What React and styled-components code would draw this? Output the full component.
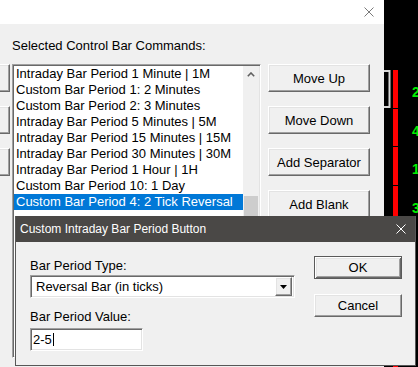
import React from "react"
import styled, { createGlobalStyle, css } from "styled-components"

const GlobalStyle = createGlobalStyle`
  html, body {
    margin: 0;
    padding: 0;
    background: #f0f0f0;
    overflow: hidden;
  }
  body {
    font-family: "Liberation Sans", Arial, sans-serif;
  }
`

const raised = css`
  box-sizing: border-box;
  border: 1px solid;
  border-color: #fff #696969 #696969 #fff;
  box-shadow: inset -1px -1px #a0a0a0, inset 1px 1px #e3e3e3;
  background: #f0f0f0;
`

const sunken = css`
  box-sizing: border-box;
  border: 1px solid;
  border-color: #a0a0a0 #fff #fff #a0a0a0;
  box-shadow: inset 1px 1px #696969, inset -1px -1px #e3e3e3;
  background: #fff;
`

const Screen = styled.div`
  position: relative;
  width: 418px;
  height: 367px;
  display: flex;
  overflow: hidden;
  font-size: 13px;
  color: #000;
`

const MainWindow = styled.div`
  width: 384px;
  display: flex;
  flex-direction: column;
  background: #f0f0f0;
`

const TitleBar = styled.div`
  height: 24px;
  flex: none;
  background: #fff;
  display: flex;
  align-items: center;
  justify-content: flex-end;
  padding-right: 10px;
`

const Body = styled.div`
  flex: 1;
  display: grid;
  grid-template-columns: 12px 256px 102px;
  grid-template-rows: 26px 1fr;
  padding-top: 14px;
  overflow: hidden;
`

const Label = styled.div`
  line-height: 16px;
  white-space: nowrap;
  grid-column: ${p => p.$col || "auto"};
`

const StubColumn = styled.div`
  grid-row: 2;
  grid-column: 1;
  display: flex;
  flex-direction: column;
  gap: 14px;
  overflow: hidden;
`

const Button = styled.button`
  ${raised};
  width: ${p => p.$w || 102}px;
  height: ${p => p.$h || 28}px;
  flex: none;
  padding: 0;
  font: 13px "Liberation Sans", Arial, sans-serif;
  color: #000;
  ${p =>
    p.$default &&
    css`
      border: 1px solid #5a5a5a;
      box-shadow: inset 1px 1px #fff, inset -1px -1px #696969,
        inset 2px 2px #e3e3e3, inset -2px -2px #a0a0a0;
    `}
`

const StubButton = styled(Button)`
  width: 80px;
  margin-left: -70px;
`

const ListBox = styled.div`
  ${sunken};
  grid-row: 2;
  grid-column: 2;
  width: 249px;
  height: 294px;
  padding: 1px;
  display: flex;
`

const Items = styled.div`
  flex: 1;
  min-width: 0;
  display: flex;
  flex-direction: column;
`

const Row = styled.div`
  height: 16px;
  line-height: 16px;
  padding-left: 2px;
  white-space: nowrap;
  overflow: hidden;
  background: ${p => (p.$selected ? "#0078d7" : "transparent")};
  color: ${p => (p.$selected ? "#fff" : "#000")};
`

const ScrollBar = styled.div`
  width: 16px;
  flex: none;
  background: #f0f0f0;
  display: flex;
  flex-direction: column;
`

const ArrowBox = styled.div`
  height: 17px;
  display: flex;
  align-items: center;
  justify-content: center;
`

const Thumb = styled.div`
  height: 120px;
  margin: 0 1px;
  background: #cdcdcd;
`

const ButtonColumn = styled.div`
  grid-row: 2;
  grid-column: 3;
  display: flex;
  flex-direction: column;
  gap: 14px;
`

const ChartStrip = styled.div`
  width: 34px;
  background: #000;
  display: flex;
`

const Dialog = styled.div`
  position: absolute;
  left: 15px;
  top: 216px;
  width: 401px;
  height: 150px;
  box-sizing: border-box;
  border: 1px solid #575757;
  border-top: none;
  background: #f0f0f0;
  display: flex;
  flex-direction: column;
`

const DialogTitle = styled.div`
  height: 26px;
  flex: none;
  background: #4a4846;
  color: #fff;
  font-size: 12px;
  display: flex;
  align-items: center;
  justify-content: space-between;
  padding: 0 9px 0 4px;
`

const DialogBody = styled.div`
  flex: 1;
  display: grid;
  grid-template-columns: 265px 88px;
  column-gap: 19px;
  padding-left: 14px;
`

const Fields = styled.div`
  display: flex;
  flex-direction: column;
  padding-top: 16px;
`

const Combo = styled.div`
  ${sunken};
  width: 265px;
  height: 23px;
  margin-top: 1px;
  padding: 2px;
  display: flex;
  align-items: center;
`

const ComboValue = styled.div`
  flex: 1;
  padding-left: 3px;
  line-height: 16px;
`

const DropButton = styled.div`
  ${raised};
  width: 17px;
  height: 19px;
  display: flex;
  align-items: center;
  justify-content: center;
`

const TextField = styled.div`
  ${sunken};
  width: 113px;
  height: 23px;
  margin-top: 3px;
  padding: 0 2px;
  display: flex;
  align-items: center;
  line-height: 16px;
`

const Caret = styled.span`
  width: 1px;
  height: 13px;
  margin-left: 1px;
  background: #000;
`

const DialogButtons = styled.div`
  display: flex;
  flex-direction: column;
  gap: 15px;
  padding-top: 14px;
`

const CloseGlyph = ({ color, size = 10 }) => (
  <svg width={size} height={size} viewBox="0 0 10 10">
    <path d="M0.5 0.5 L9.5 9.5 M9.5 0.5 L0.5 9.5" stroke={color} strokeWidth="1" />
  </svg>
)

const rows = [
  "Intraday Bar Period 1 Minute | 1M",
  "Custom Bar Period 1: 2 Minutes",
  "Custom Bar Period 2: 3 Minutes",
  "Intraday Bar Period 5 Minutes | 5M",
  "Intraday Bar Period 15 Minutes | 15M",
  "Intraday Bar Period 30 Minutes | 30M",
  "Intraday Bar Period 1 Hour | 1H",
  "Custom Bar Period 10: 1 Day",
  "Custom Bar Period 4: 2 Tick Reversal",
]
const selected = 8

const bars = [
  { top: 70, bottom: 108, label: "2" },
  { top: 109, bottom: 146, label: "4" },
  { top: 147, bottom: 185, label: "1" },
  { top: 186, bottom: 367, label: "3" },
]

const Chart = () => (
  <svg width="34" height="367" viewBox="0 0 34 367">
    <path d="M0 71 H5.5 V107 H0" fill="none" stroke="#d8d8d8" strokeWidth="2" />
    {bars.map(b => (
      <g key={b.label}>
        <rect x="9" y={b.top} width="5" height={b.bottom - b.top} fill="#ff0000" />
        <text
          x="28"
          y={b.top + 27}
          fill="#00ee00"
          fontSize="14"
          fontWeight="bold"
          fontFamily="Liberation Sans, Arial, sans-serif"
        >
          {b.label}
        </text>
      </g>
    ))}
  </svg>
)

const App = () => (
  <>
    <GlobalStyle />
    <Screen>
      <MainWindow>
        <TitleBar>
          <CloseGlyph color="#7a7a7a" />
        </TitleBar>
        <Body>
          <Label $col="2">Selected Control Bar Commands:</Label>
          <StubColumn>
            <StubButton />
            <StubButton />
            <StubButton />
          </StubColumn>
          <ListBox>
            <Items>
              {rows.map((r, i) => (
                <Row key={r} $selected={i === selected}>
                  {r}
                </Row>
              ))}
            </Items>
            <ScrollBar>
              <ArrowBox>
                <svg width="8" height="5" viewBox="0 0 8 5">
                  <path d="M0.8 4.2 L4 1 L7.2 4.2" fill="none" stroke="#606060" strokeWidth="1.6" />
                </svg>
              </ArrowBox>
              <Thumb style={{ marginTop: 113 }} />
            </ScrollBar>
          </ListBox>
          <ButtonColumn>
            <Button>Move Up</Button>
            <Button>Move Down</Button>
            <Button>Add Separator</Button>
            <Button>Add Blank</Button>
          </ButtonColumn>
        </Body>
      </MainWindow>
      <ChartStrip>
        <Chart />
      </ChartStrip>

      <Dialog>
        <DialogTitle>
          <span>Custom Intraday Bar Period Button</span>
          <CloseGlyph color="#fff" />
        </DialogTitle>
        <DialogBody>
          <Fields>
            <Label>Bar Period Type:</Label>
            <Combo>
              <ComboValue>Reversal Bar (in ticks)</ComboValue>
              <DropButton>
                <svg width="7" height="4" viewBox="0 0 7 4">
                  <path d="M0 0 H7 L3.5 4 Z" fill="#000" />
                </svg>
              </DropButton>
            </Combo>
            <Label style={{ marginTop: 11 }}>Bar Period Value:</Label>
            <TextField>
              2-5
              <Caret />
            </TextField>
          </Fields>
          <DialogButtons>
            <Button $w={88} $h={23} $default>
              OK
            </Button>
            <Button $w={88} $h={23}>
              Cancel
            </Button>
          </DialogButtons>
        </DialogBody>
      </Dialog>
    </Screen>
  </>
)

export default App
